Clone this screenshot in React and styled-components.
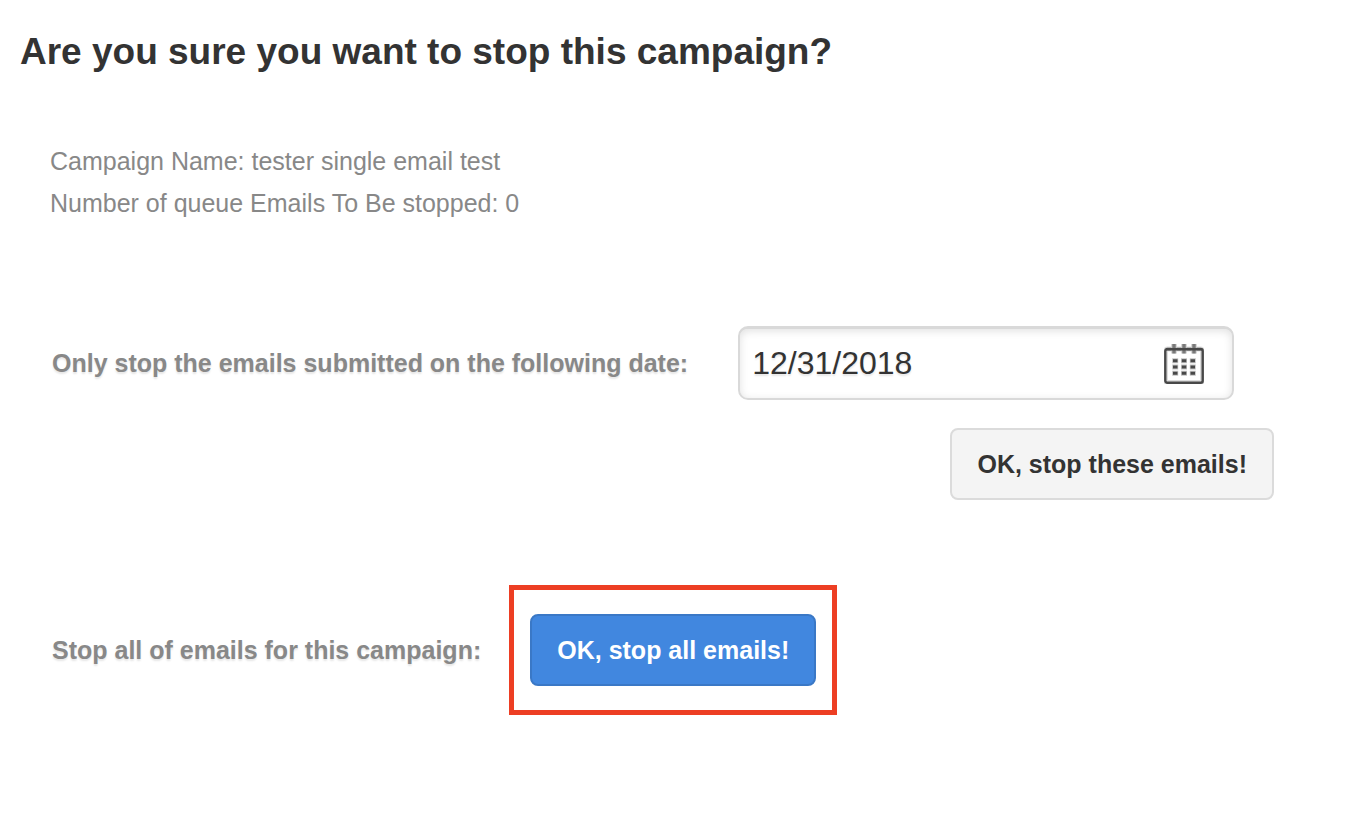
import React, {useState} from 'react';
import styled, {createGlobalStyle} from 'styled-components';

function App() {
  const [date, setDate] = useState('12/31/2018')

  const handleDateChange = (event) => {
    setDate(event.target.value);
  }

  return (
    <>
      <GlobalStyle />
      <Page>
        <Title>Are you sure you want to stop this campaign?</Title>

        <Details>
          <div>Campaign Name: tester single email test</div>
          <div>Number of queue Emails To Be stopped: 0</div>
        </Details>

        <DateSection>
          <DateRow>
            <Label htmlFor="stopDate">Only stop the emails submitted on the following date:</Label>
            <DateField>
              <DateInput id="stopDate" type="text" value={date} onChange={handleDateChange} />
              <CalendarButton type="button" aria-label="Open calendar">
                <CalendarIcon />
              </CalendarButton>
            </DateField>
          </DateRow>
          <Button type="button">OK, stop these emails!</Button>
        </DateSection>

        <AllRow>
          <Label as="span" id="stopAllLabel">Stop all of emails for this campaign:</Label>
          <Highlight>
            <Button type="button" $primary aria-describedby="stopAllLabel">OK, stop all emails!</Button>
          </Highlight>
        </AllRow>
      </Page>
    </>
  );
}

const CalendarIcon = () => (
  <svg width="40" height="40" viewBox="0 0 40 40" fill="none" aria-hidden="true">
    <rect x="1.5" y="5" width="37" height="33.5" rx="2" stroke="#ddd" strokeWidth="5" />
    <rect x="1.3" y="5" width="37.4" height="33.7" rx="2" stroke="#484848" strokeWidth="2.4" />
    {/* binder rings */}
    <path d="M10 0V9.5M20 0V9.5M30 0V9.5" stroke="#ccc" strokeWidth="5.5" />
    <path d="M10 0V9.5M20 0V9.5M30 0V9.5" stroke="#7a7a7a" strokeWidth="3.4" />
    <path d="M2 5.2H38" stroke="#484848" strokeWidth="2.6" />
    {[16.8, 23, 29.3].map((y) => (
      <React.Fragment key={y}>
        <path d={`M8.2 ${y}H14.2M17 ${y}H23M25.8 ${y}H31.8`} stroke="#c4c4c4" strokeWidth="5" />
        <path d={`M9 ${y}H13.5M17.8 ${y}H22.3M26.5 ${y}H31`} stroke="#484848" strokeWidth="3" />
      </React.Fragment>
    ))}
  </svg>
)

const GlobalStyle = createGlobalStyle`
  * {
    box-sizing: border-box;
  }

  body {
    margin: 0;
    background-color: #fff;
    color: #333;
    font-family: "Liberation Sans", Arial, sans-serif;
    font-size: 25px;
  }
`

const Page = styled.main`
  padding: 28px 74px 48px 20px;
`

const Title = styled.h1`
  margin: 0;
  font-size: 37px;
  line-height: 48px;
`

const Details = styled.div`
  margin: 64px 0 0 30px;
  color: #888;
  line-height: 42px;
`

const DateSection = styled.section`
  display: flex;
  flex-direction: column;
  align-items: flex-end;
  gap: 28px;
  margin: 102px 0 0 32px;
`

const DateRow = styled.div`
  display: flex;
  align-items: center;
  align-self: stretch;
  gap: 50px;
  padding-right: 40px;
`

const Label = styled.label`
  color: #888;
  font-weight: bold;
  line-height: 32px;
  text-shadow: 0 2px 2px rgba(0, 0, 0, 0.1);
`

const DateField = styled.div`
  display: flex;
  flex: 1;
  align-items: center;
  min-width: 0;
  height: 74px;
  padding: 0 28px 0 12px;
  border: 2px solid #d9d9d9;
  border-top-width: 3px;
  border-radius: 10px;
  box-shadow: inset 0 2px 8px rgba(0, 0, 0, 0.12);
`

const DateInput = styled.input`
  flex: 1;
  min-width: 0;
  padding: 0;
  border: 0;
  outline: 0;
  background: transparent;
  color: #333;
  font: inherit;
  font-size: 32px;
  text-shadow: 0 2px 2px rgba(0, 0, 0, 0.1);
`

const CalendarButton = styled.button`
  padding: 0;
  border: 0;
  background: none;
  line-height: 0;
  cursor: pointer;
`

const Button = styled.button`
  height: 72px;
  padding: 0 25px;
  border: 2px solid ${(props) => props.$primary ? '#3a78c6' : '#dbdbdb'};
  border-radius: 8px;
  background-color: ${(props) => props.$primary ? '#4187df' : '#f4f4f4'};
  color: ${(props) => props.$primary ? '#fff' : '#333'};
  font: inherit;
  font-weight: bold;
  white-space: nowrap;
  cursor: pointer;
`

const AllRow = styled.section`
  display: flex;
  align-items: center;
  gap: 28px;
  margin: 85px 0 0 32px;
`

const Highlight = styled.div`
  padding: 24px 16px;
  border: 5px solid #ed3e23;
`

export default App;
